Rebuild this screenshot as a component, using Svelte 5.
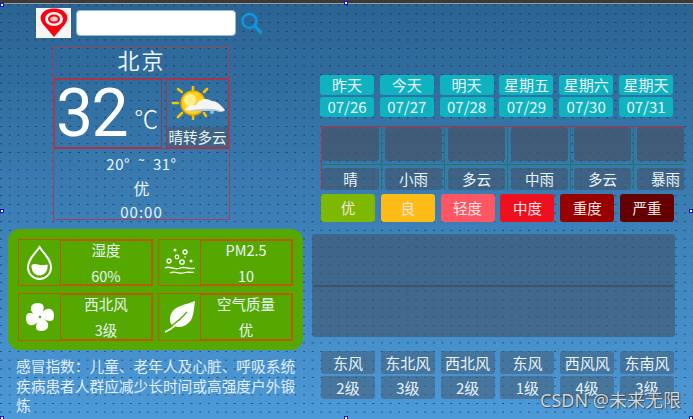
<script lang="ts">
  const days = [
    { name: '昨天', date: '07/26', weather: '晴', wind: '东风', level: '2级' },
    { name: '今天', date: '07/27', weather: '小雨', wind: '东北风', level: '3级' },
    { name: '明天', date: '07/28', weather: '多云', wind: '西北风', level: '2级' },
    { name: '星期五', date: '07/29', weather: '中雨', wind: '东风', level: '1级' },
    { name: '星期六', date: '07/30', weather: '多云', wind: '西风风', level: '4级' },
    { name: '星期天', date: '07/31', weather: '暴雨', wind: '东南风', level: '3级' }
  ];

  const aqi = [
    { label: '优', color: '#7fb800' },
    { label: '良', color: '#ffbb16' },
    { label: '轻度', color: '#ff5664' },
    { label: '中度', color: '#ee101e' },
    { label: '重度', color: '#980000' },
    { label: '严重', color: '#640000' }
  ];
</script>

<div class="page">
  <div class="topbar"></div>

  <div class="content">
    <section class="left">
      <div class="search">
        <div class="pin">
          <svg width="32" height="30" viewBox="0 0 32 30">
            <path d="M16 29 L7 18.500 C3 14.500 1.500 10 3.500 6.500 C6 2 11 0.500 16 0.500 C21 0.500 26 2 28.500 6.500 C30.500 10 29 14.500 25 18.500 Z" fill="#fa0010" />
            <ellipse cx="16" cy="11" rx="9" ry="7" fill="#f7f7f7" />
            <ellipse cx="16" cy="11" rx="6" ry="4.500" fill="#fa0010" />
            <ellipse cx="16" cy="11" rx="3.800" ry="2.500" fill="#f7c8c8" />
          </svg>
        </div>
        <div class="input"></div>
        <svg class="lens" width="21" height="22" viewBox="0 0 21 22">
          <circle cx="8.500" cy="9" r="7" fill="none" stroke="#0f96dc" stroke-width="2.600" />
          <path d="M13.500 14 L19.500 20" stroke="#0f96dc" stroke-width="3.200" stroke-linecap="round" />
        </svg>
      </div>

      <div class="today">
        <div class="city">北京</div>
        <div class="now">
          <div class="temp">
            <span class="big">32</span>
            <span class="unit">℃</span>
          </div>
          <div class="sky">
            <svg width="56" height="34" viewBox="0 0 56 34">
              <g stroke="#f5c400" stroke-width="2.600" stroke-linecap="round">
                <path d="M23 1 L23 6" />
                <path d="M23 28 L23 33" />
                <path d="M8 17 L3 17" />
                <path d="M12 6 L8 3" />
                <path d="M34 6 L37 3" />
                <path d="M12 27 L8 31" />
                <path d="M34 27 L36 30" />
              </g>
              <circle cx="23" cy="17" r="12" fill="#ffd21e" stroke="#e8a400" stroke-width="1.500" />
              <circle cx="20" cy="14" r="6" fill="#ffef8a" />
              <path d="M15 24 C17 19 23 19 26 19 C29 13 36 11 42 15 C47 15 52 20 55 24 C54 26 50 26 46 25 L20 25 Z" fill="#f2f4f6" />
              <path d="M18 25 L50 25 C46 22 30 22 18 25 Z" fill="#b9c4cf" />
              <circle cx="42" cy="26" r="2" fill="#7ec4e4" />
            </svg>
            <span class="sky-text">晴转多云</span>
          </div>
        </div>
        <div class="range">
          <span class="temps">20° ˜ 31°</span>
          <span class="quality">优</span>
          <span class="clock">00:00</span>
        </div>
      </div>

      <div class="stats">
        <div class="stat">
          <div class="stat-icon">
            <svg width="27" height="36" viewBox="0 0 27 36">
              <path d="M13.500 2 C9 9 2 14 2 22.500 A11.500 11.500 0 0 0 25 22.500 C25 14 18 9 13.500 2 Z" fill="none" stroke="#fff" stroke-width="2" />
              <path d="M5.500 20 C10 17 13 22 21.500 19.500 C22.500 25 19 30.500 13.500 30.500 C8 30.500 5 25 5.500 20 Z" fill="#fff" />
            </svg>
          </div>
          <div class="stat-text"><span>湿度</span><span>60%</span></div>
        </div>
        <div class="stat">
          <div class="stat-icon">
            <svg width="32" height="32" viewBox="0 0 32 32" fill="none" stroke="#fff">
              <circle cx="11" cy="3" r="1.500" fill="#fff" stroke="none" />
              <circle cx="21" cy="5" r="2" stroke-width="1.300" />
              <circle cx="13" cy="10" r="1.800" stroke-width="1.300" />
              <circle cx="5" cy="14" r="2" stroke-width="1.300" />
              <circle cx="18" cy="15" r="2.200" stroke-width="1.300" />
              <circle cx="27" cy="14" r="1.500" fill="#fff" stroke="none" />
              <circle cx="21" cy="10" r="0.800" fill="#fff" stroke="none" />
              <path d="M1 21 C6 18 10 24 16 21 C21 19 25 23 31 21" stroke-width="1.300" />
              <path d="M6 26 C11 23 15 28 21 25.500 C24 24.500 27 26 30 25" stroke-width="1.300" />
            </svg>
          </div>
          <div class="stat-text"><span>PM2.5</span><span>10</span></div>
        </div>
        <div class="stat">
          <div class="stat-icon">
            <svg width="30" height="30" viewBox="0 0 30 30" fill="#fff">
              <path d="M15 15 C9 13 5 10 6 5 C7 1 13 0 17 2 C20 4 19 9 15 15 Z" />
              <path d="M15 15 C17 9 21 6 25 7 C29 8 30 14 28 18 C26 20 21 19 15 15 Z" />
              <path d="M15 15 C20 17 24 20 23 25 C22 29 16 30 12 28 C10 26 11 21 15 15 Z" />
              <path d="M15 15 C13 21 9 24 5 23 C1 22 0 16 2 12 C4 10 9 11 15 15 Z" />
              <circle cx="15" cy="15" r="1.200" fill="#54a800" />
            </svg>
          </div>
          <div class="stat-text"><span>西北风</span><span>3级</span></div>
        </div>
        <div class="stat">
          <div class="stat-icon">
            <svg width="32" height="32" viewBox="0 0 32 32">
              <path d="M31 0 C22 4 11 4 7 13 C5 18 6 22 8 24 C14 28 24 26 28 17 C30 12 30 6 31 0 Z" fill="#fff" />
              <path d="M1 31 C6 29 14 24 23 11" fill="none" stroke="#fff" stroke-width="1.400" />
              <path d="M8 24.500 C13 21 18 17 23 11" fill="none" stroke="#54a800" stroke-width="1.200" />
            </svg>
          </div>
          <div class="stat-text"><span>空气质量</span><span>优</span></div>
        </div>
      </div>

      <p class="tips">感冒指数：儿童、老年人及心脏、呼吸系统<br />疾病患者人群应减少长时间或高强度户外锻炼</p>
    </section>

    <section class="right">
      <div class="row dates">
        {#each days as day}
          <div class="date-card">
            <span>{day.name}</span>
            <span>{day.date}</span>
          </div>
        {/each}
      </div>

      <div class="forecast">
        {#each days as day}
          <div class="forecast-col">
            <div class="tile"></div>
            <div class="weather">{day.weather}</div>
          </div>
        {/each}
      </div>

      <div class="row levels">
        {#each aqi as item}
          <div class="level" style="background: {item.color}">{item.label}</div>
        {/each}
      </div>

      <div class="charts">
        <div class="chart"></div>
        <div class="chart"></div>
      </div>

      <div class="row winds">
        {#each days as day}
          <div class="wind-card">
            <span>{day.wind}</span>
            <span>{day.level}</span>
          </div>
        {/each}
      </div>
    </section>
  </div>

  <i class="handle" style="left: 0; top: 3px"></i>
  <i class="handle" style="left: 0; top: 209px"></i>
  <i class="handle" style="left: 344px; top: 1px"></i>
  <i class="handle" style="left: 689px; top: 209px"></i>
  <i class="handle" style="left: 344px; top: 416px"></i>
  <i class="handle" style="left: 0; top: 416px"></i>
  <i class="handle" style="left: 689px; top: 416px"></i>

  <div class="watermark">CSDN @未来无限</div>
</div>

<style>
  :global(body) {
    margin: 0;
  }

  .page {
    position: relative;
    width: 693px;
    height: 419px;
    overflow: hidden;
    display: flex;
    flex-direction: column;
    color: #eaf4fa;
    font-family: "Noto Sans CJK SC", "Noto Sans", sans-serif;
    background-color: #3a7bb2;
    background-image:
      radial-gradient(circle at 1px 5px, rgba(15, 25, 40, 0.75) 0.5px, transparent 0.8px),
      linear-gradient(#2a6392, #4c9ad8);
    background-size: 8.66px 8.66px, 100% 100%;
  }

  .topbar {
    height: 3px;
    background: #3a3a3a;
    border-bottom: 1px solid #9a9a9a;
    flex: none;
  }

  .content {
    flex: 1;
    display: flex;
    min-height: 0;
  }

  .left {
    width: 305px;
    flex: none;
    box-sizing: border-box;
    padding: 4px 0 0 8px;
    display: flex;
    flex-direction: column;
  }

  .search {
    display: flex;
    align-items: center;
    height: 30px;
    margin-left: 28px;
  }

  .pin {
    width: 35px;
    height: 30px;
    background: #f6f6f6;
    display: flex;
    justify-content: center;
  }

  .input {
    width: 158px;
    height: 24px;
    margin-left: 5px;
    background: #fff;
    border: 1px solid #8fb8dc;
    border-radius: 4px;
  }

  .lens {
    margin-left: 5px;
  }

  .today {
    width: 177px;
    height: 173px;
    box-sizing: border-box;
    margin: 9px 0 0 45px;
    border: 1px solid #a0405f;
    display: flex;
    flex-direction: column;
  }

  .city {
    height: 30px;
    flex: none;
    text-align: center;
    font-size: 22px;
    line-height: 22px;
    letter-spacing: 2px;
  }

  .now {
    height: 71px;
    flex: none;
    display: flex;
    gap: 4px;
    box-sizing: border-box;
    border: 1px solid #a8344c;
    border-width: 1px 0;
  }

  .temp {
    width: 108px;
    box-sizing: border-box;
    border: 1px solid #a8344c;
    border-right-color: #7a3d60;
    display: flex;
    align-items: center;
    color: #fff;
  }

  .big {
    font-family: Roboto, sans-serif;
    font-weight: 400;
    font-size: 66px;
    line-height: 1;
    letter-spacing: -1.500px;
    margin-left: 1px;
  }

  .unit {
    font-size: 24px;
    font-weight: 300;
    margin: 8px 0 0 7px;
    line-height: 1;
  }

  .sky {
    flex: 1;
    box-sizing: border-box;
    border: 1px solid #a8344c;
    display: flex;
    flex-direction: column;
    align-items: center;
    justify-content: space-between;
    padding-top: 6px;
  }

  .sky-text {
    font-size: 14.500px;
    line-height: 20px;
    white-space: nowrap;
    background: rgba(70, 90, 110, 0.6);
    align-self: stretch;
    text-align: center;
  }

  .range {
    flex: 1;
    display: flex;
    flex-direction: column;
    align-items: center;
    font-size: 15px;
    padding-top: 3px;
    line-height: 24px;
  }

  .temps {
    word-spacing: 4px;
    letter-spacing: 0.500px;
  }

  .quality {
    font-size: 16px;
  }

  .clock {
    letter-spacing: 1px;
  }

  .stats {
    width: 295px;
    height: 121px;
    box-sizing: border-box;
    margin-top: 9px;
    padding: 10px 10px 9px;
    background: #54a800;
    border-radius: 12px;
    display: grid;
    grid-template-columns: 135px 135px;
    grid-template-rows: 47px 48px;
    column-gap: 5px;
    row-gap: 7px;
  }

  .stat {
    display: flex;
    border: 1px solid #b85a08;
  }

  .stat-icon {
    width: 41px;
    flex: none;
    display: flex;
    align-items: center;
    justify-content: center;
    border-right: 1px solid #b85a08;
  }

  .stat-text {
    flex: 1;
    display: flex;
    flex-direction: column;
    align-items: center;
    justify-content: center;
    gap: 6px;
    font-size: 14.500px;
    line-height: 20px;
    border: 1px solid #b85a08;
    border-width: 1px 1px 1px 0;
  }

  .tips {
    width: 284px;
    margin: 6px 0 0 8px;
    font-size: 14.700px;
    line-height: 19.500px;
    color: #e2eef8;
  }

  .right {
    flex: 1;
    min-width: 0;
    position: relative;
    padding-top: 71px;
    box-sizing: border-box;
    display: flex;
    flex-direction: column;
  }

  .row {
    display: grid;
    grid-template-columns: repeat(6, 54px);
    column-gap: 5.800px;
    margin-left: 15px;
  }

  .date-card {
    display: flex;
    flex-direction: column;
    gap: 2px;
    font-size: 15px;
    text-align: center;
  }

  .date-card span {
    height: 20px;
    line-height: 20px;
    background: #0fb3c0;
    border-radius: 3px;
    white-space: nowrap;
  }

  .forecast {
    display: flex;
    gap: 6px;
    margin: 9px 0 0 16px;
    width: 362px;
    overflow: hidden;
    border-top: 1px solid #a8344c;
    border-left: 1px solid #a8344c;
    height: 63px;
  }

  .forecast-col {
    width: 57px;
    flex: none;
    display: flex;
    flex-direction: column;
    position: relative;
  }

  .forecast-col::after {
    content: "";
    position: absolute;
    right: -3px;
    top: 0;
    bottom: 0;
    width: 1px;
    background: #1d7a5a;
  }

  .tile {
    height: 34px;
    background: rgba(68, 84, 104, 0.75);
    border-radius: 3px;
  }

  .weather {
    margin-top: 6.500px;
    height: 22px;
    line-height: 22px;
    text-align: center;
    font-size: 14.500px;
    background: rgba(68, 84, 104, 0.6);
    border-radius: 3px;
    white-space: nowrap;
    position: relative;
  }

  .weather::before {
    content: "";
    position: absolute;
    left: -6px;
    right: -6px;
    top: -4px;
    height: 1px;
    background: #1d7a5a;
  }

  .levels {
    margin-top: 4px;
    height: 28px;
    margin-left: 16px;
  }

  .level {
    border-radius: 3px;
    text-align: center;
    font-size: 14.500px;
    line-height: 27px;
    color: #f4e8e8;
  }

  .charts {
    margin: 12px 0 0 7px;
    width: 363px;
    height: 103px;
    display: flex;
    flex-direction: column;
    background: rgba(64, 84, 108, 0.62);
    border-radius: 3px;
  }

  .chart {
    flex: 1;
  }

  .chart:first-child {
    border-bottom: 2px solid #3c5268;
    margin: 0 2px;
  }

  .winds {
    margin-top: 14px;
    margin-left: 16px;
  }

  .wind-card {
    display: flex;
    flex-direction: column;
    gap: 2px;
    font-size: 15px;
    text-align: center;
  }

  .wind-card span {
    height: 23px;
    line-height: 23px;
    background: rgba(68, 96, 124, 0.6);
    border-radius: 3px;
    white-space: nowrap;
  }

  .handle {
    position: absolute;
    width: 4px;
    height: 4px;
    box-sizing: border-box;
    border: 1px solid #1010e0;
    background: #fff;
  }

  .watermark {
    position: absolute;
    left: 540px;
    top: 390px;
    font-size: 18px;
    line-height: 20px;
    white-space: nowrap;
    color: #d0d6da;
    text-shadow: 0 0 1px #333, 1px 1px 1px rgba(40, 50, 60, 0.7);
    font-family: "Noto Sans", "Noto Sans CJK SC", sans-serif;
  }
</style>
